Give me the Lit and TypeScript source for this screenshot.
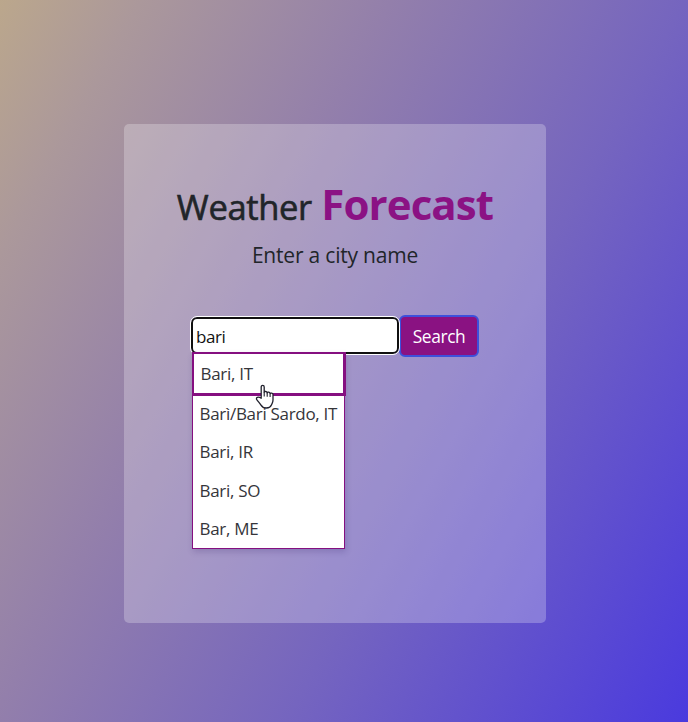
import { LitElement, html, css } from "lit";
import { customElement, state } from "lit/decorators.js";
import { classMap } from "lit/directives/class-map.js";

@customElement("app-root")
export class AppRoot extends LitElement {
  static styles = css`
    :host {
      display: block;
      box-sizing: border-box;
      height: 722px;
      padding: 124px 142px 99px 124px;
      overflow: hidden;
      font-family: "Open Sans", "Noto Sans", sans-serif;
      color: #212529;
      background: linear-gradient(119deg, #bba78c 0%, #ab989b 13%, #937fab 36%, #7565bf 63%, #4a3ade 100%);
    }
    .card {
      box-sizing: border-box;
      height: 499px;
      padding-top: 48px;
      border-radius: 5px;
      background: rgba(255, 255, 255, 0.25);
      text-align: center;
    }
    h1 {
      margin: 0;
      height: 66px;
      line-height: 64px;
      font-size: 34.6px;
      font-weight: 500;
      letter-spacing: -0.4px;
      white-space: nowrap;
    }
    .title {
      -webkit-text-stroke: 0.6px #212529;
    }
    .accent {
      margin-left: 1px;
      color: #8b1284;
      font-size: 42px;
      font-weight: 700;
      letter-spacing: -0.9px;
    }
    .hint {
      margin: 0;
      height: 36px;
      line-height: 35px;
      font-size: 21px;
      letter-spacing: -0.2px;
    }
    form {
      display: flex;
      align-items: center;
      margin: 41px 0 0 67px;
      height: 42px;
    }
    .field {
      position: relative;
      width: 208px;
      height: 38px;
    }
    input {
      box-sizing: border-box;
      display: block;
      width: 208px;
      height: 37px;
      padding: 2px 3px 0;
      border: 2px solid #101010;
      border-radius: 6px;
      outline: 1px solid #fff;
      outline-offset: 0;
      background: #fff;
      color: #111;
      font: 17px "Open Sans", sans-serif;
      letter-spacing: -0.4px;
    }
    button {
      box-sizing: border-box;
      width: 80px;
      height: 42px;
      padding: 0;
      border: 2px solid #3d50dc;
      border-radius: 6px;
      background: #8a1282;
      color: #fff;
      font: 17.4px "Open Sans", sans-serif;
      letter-spacing: -0.4px;
    }
    .menu {
      position: absolute;
      top: 35px;
      left: 1px;
      box-sizing: border-box;
      width: 153px;
      height: 197px;
      margin: 0;
      padding: 0;
      list-style: none;
      border: 1px solid #850f80;
      background: #fff;
      box-shadow: 1px 3px 6px rgba(50, 30, 100, 0.2);
      text-align: left;
      font-size: 17px;
      letter-spacing: -0.3px;
      color: #35353a;
    }
    .menu li {
      box-sizing: border-box;
      height: 38.4px;
      padding-left: 6.5px;
      line-height: 35px;
      white-space: nowrap;
    }
    .menu li.hover {
      width: 154px;
      height: 44px;
      margin: -1px 0 0 -1px;
      padding-left: 6.5px;
      border: 2px solid #850f80;
      border-right-width: 3px;
      border-bottom-width: 3px;
      line-height: 39px;
    }
    .cursor {
      position: absolute;
      left: 64px;
      top: 67px;
      width: 20px;
      height: 25px;
    }
  `;

  @state() private selected = 0;
  private cities = ["Bari, IT", "Barì/Bari Sardo, IT", "Bari, IR", "Bari, SO", "Bar, ME"];

  render() {
    return html`
      <main class="card">
        <h1><span class="title">Weather</span> <span class="accent">Forecast</span></h1>
        <p class="hint"><span>Enter a city name</span></p>
        <form @submit=${(e: Event) => e.preventDefault()}>
          <div class="field">
            <input type="text" value="bari" aria-label="City" />
            <ul class="menu">
              ${this.cities.map(
                (city, i) => html`<li
                  class=${classMap({ hover: i === this.selected })}
                  @mouseenter=${() => (this.selected = i)}
                ><span>${city}</span></li>`
              )}
            </ul>
            <svg class="cursor" viewBox="0 0 20 25" aria-hidden="true">
              <path
                d="M6.2 14.2V3c0-2.2 3-2.2 3 0v5.4c.3-1.4 3-1.2 3 .5.4-1.3 2.9-1 2.9.7.6-1 2.9-.6 2.9 1v5.4c0 2.6-1 3.5-1.6 5-.8 2-2.4 3-5 3-2.8 0-4.3-1-5.6-3.2-1.1-1.8-2.8-3.4-4-5.1-1.3-2 1.2-3.8 4.4-1.5z"
                fill="#fff" stroke="#20202c" stroke-width="1.3" stroke-linejoin="round"
              />
              <path d="M9.2 8.4v4.1M12.2 8.9v3.8M15.1 9.6v3.4" fill="none" stroke="#20202c" stroke-width="1.1" />
            </svg>
          </div>
          <button type="submit">Search</button>
        </form>
      </main>
    `;
  }
}
